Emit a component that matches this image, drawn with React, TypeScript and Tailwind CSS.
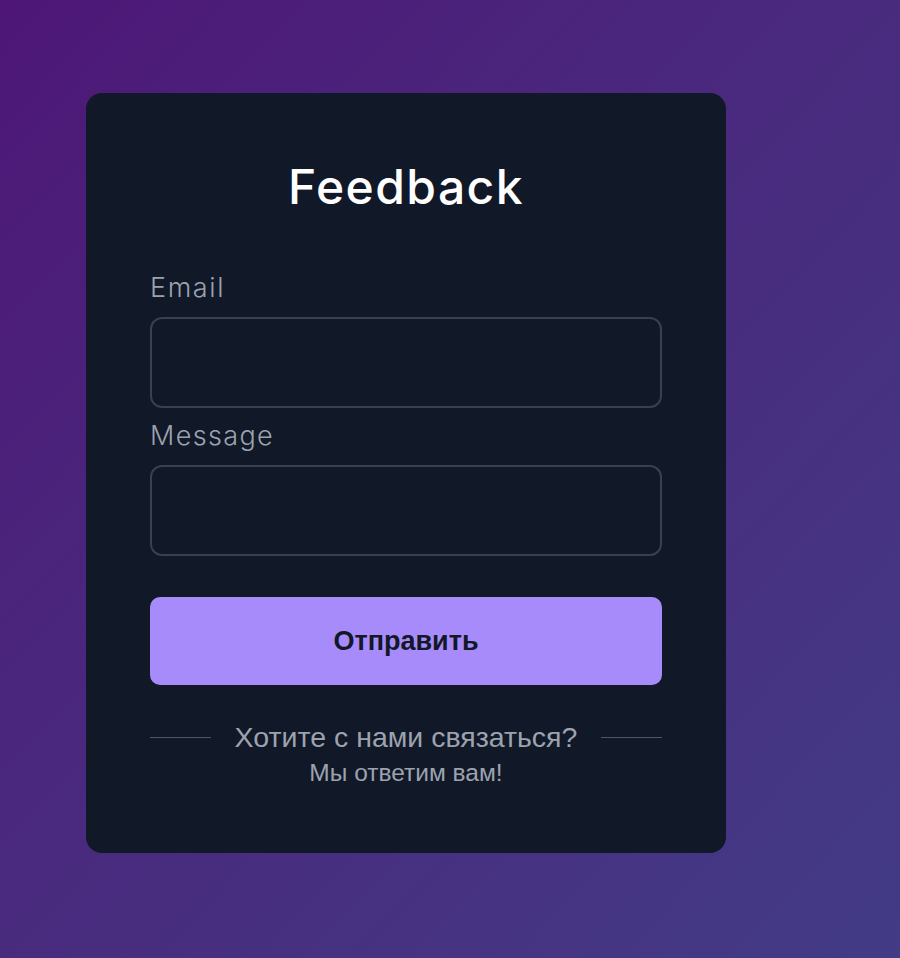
export default function App() {
  return (
    <div className="min-h-screen w-full bg-linear-to-br from-[#4d1677] to-[#423b85] pl-[86px] pt-[93px]">
      <div className="flex w-[640px] flex-col rounded-2xl bg-[#111827] px-16 pt-[70px] pb-[68px]">
        <h1 className="text-center font-['Inter',sans-serif] text-[48px] font-medium leading-none tracking-[0.03em] text-white">
          Feedback
        </h1>

        <form className="mt-[63px] flex flex-col" onSubmit={(e) => e.preventDefault()}>
          <label className="mb-4 block font-['Inter',sans-serif] text-[27px] font-light leading-none tracking-[0.06em] text-[#9ca3af]">
            Email
          </label>
          <input
            type="email"
            className="h-[91px] w-full rounded-xl border-2 border-[#374151] bg-transparent px-4 text-white outline-none"
          />

          <label className="mt-[14px] mb-4 block font-['Inter',sans-serif] text-[27px] font-light leading-none tracking-[0.05em] text-[#9ca3af]">
            Message
          </label>
          <input
            type="text"
            className="h-[91px] w-full rounded-xl border-2 border-[#374151] bg-transparent px-4 text-white outline-none"
          />

          <button
            type="submit"
            className="mt-[41px] h-[88px] w-full rounded-[10px] bg-[#a78bfa] font-['Liberation_Sans',Arial,sans-serif] text-[27px] font-bold text-[#111827]"
          >
            Отправить
          </button>
        </form>

        <div className="mt-[38px] flex items-center gap-6">
          <div className="h-px flex-1 bg-[#4b5563]" />
          <p className="font-['Liberation_Sans',Arial,sans-serif] text-[28.5px] leading-none text-[#9ca3af]">
            Хотите с нами связаться?
          </p>
          <div className="h-px flex-1 bg-[#4b5563]" />
        </div>
        <p className="mt-[9px] text-center font-['Liberation_Sans',Arial,sans-serif] text-[24.5px] leading-none text-[#9ca3af]">
          Мы ответим вам!
        </p>
      </div>
    </div>
  );
}
